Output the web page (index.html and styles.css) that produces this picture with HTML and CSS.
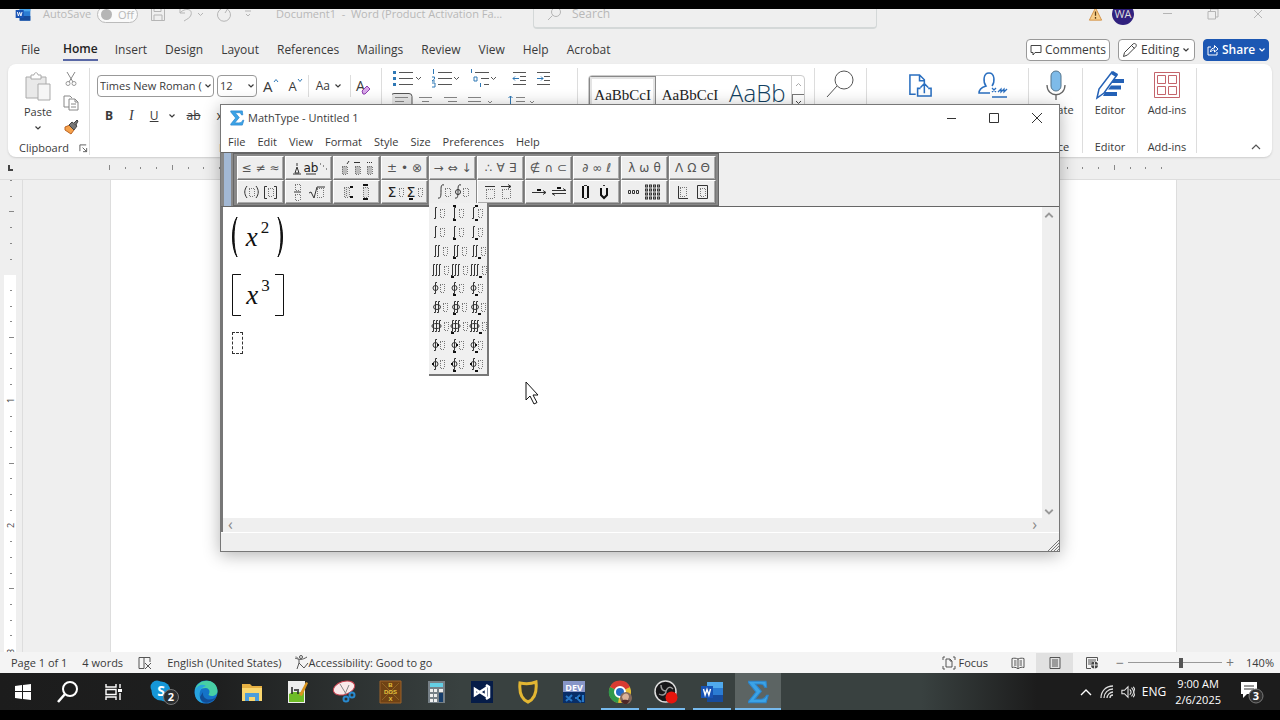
FILE: index.html
```html
<!DOCTYPE html>
<html lang="en">
<head>
<meta charset="utf-8">
<title>Document1 - Word</title>
<link rel="stylesheet" href="styles.css">
</head>
<body>
<svg class="defs" aria-hidden="true">
  <symbol id="chev" viewBox="0 0 8 6"><path d="M1.5 1.5 4 4l2.500-2.500" fill="none" stroke="currentColor" stroke-width="1.200"/></symbol>
  <symbol id="sigma" viewBox="0 0 18 18"><path d="M2 1h13l.5 4.500H14C13.500 3.500 12.500 3 10.500 3H7l4.500 5.500L6.500 14.500H11c2.500 0 3.500-1 4.500-3h1.200L15 17H2v-1.200L7.500 9 2 2.200z" fill="#3ba3e6" stroke="#2b86cf" stroke-width=".8"/></symbol>
  <symbol id="word" viewBox="0 0 24 22"><path d="M7 1h16v20H7z" fill="#2b7cd3"/><path d="M7 1h16v6H7z" fill="#50a9ec"/><path d="M7 14h16v7H7z" fill="#174b9c"/><path d="M1 5h12v12H1z" fill="#1853b4"/><path d="m3.500 8 1.600 6L7 8.500 8.900 14l1.600-6" fill="none" stroke="#fff" stroke-width="1.400"/></symbol>
</svg>
<div class="desktop">
  <div class="band"></div>

  <header class="titlebar">
    <div class="titlerow">
      <div class="quick">
        <svg class="i16" aria-hidden="true"><use href="#word"/></svg>
        <label class="autosave">AutoSave <input type="checkbox" class="toggle"><span class="switch">Off</span></label>
        <svg class="i16" viewBox="0 0 16 16"><path d="M1.500 1.500h11l2 2v11h-13zM4 1.500v4h7v-4M4 14.500V9h8v5.500" class="ln"/></svg>
        <svg class="undo" viewBox="0 0 26 16"><path d="M2 2v5h5M2 7c4-5 13-5 11 2-1 3-4 4-7 6M20 7l2.500 2.500L25 7" class="ln"/></svg>
        <svg class="i16" viewBox="0 0 16 16"><path d="M5 3a6.500 6.500 0 1 0 6 0M7 1l4.500 2L9 7" class="ln"/></svg>
        <svg class="i8" viewBox="0 0 8 8"><path d="M1 1h6M2 4l2 2 2-2" class="ln"/></svg>
        <span class="doc">Document1&nbsp; -&nbsp; Word (Product Activation Fa...</span>
      </div>
      <label class="search"><svg viewBox="0 0 16 16"><circle cx="10" cy="6" r="4.500" class="ln"/><path d="M6.500 9.500 2 14" class="ln"/></svg><input type="text" placeholder="Search" aria-label="Search"></label>
      <div class="wincontrols">
        <svg class="warn" viewBox="0 0 16 16"><path d="M8 1 15 15H1z" fill="#f8cf8c" stroke="#d08a3a"/><path d="M8 5v5M8 11.500v2" stroke="#5a3b12" stroke-width="1.500"/></svg>
        <span class="avatar">WA</span>
        <button aria-label="Minimize"><svg viewBox="0 0 12 12"><path d="M1 5.500h9" class="ln"/></svg></button>
        <button aria-label="Restore"><svg viewBox="0 0 12 12"><path d="M1 3.500h7.500V11H1zM3.500 3V1H11v8H9" class="ln"/></svg></button>
        <button aria-label="Close"><svg viewBox="0 0 12 12"><path d="m2 2 8 8M10 2l-8 8" class="ln"/></svg></button>
      </div>
    </div>
  </header>

  <nav class="tabs">
    <a href="#">File</a><a href="#" class="current">Home</a><a href="#">Insert</a><a href="#">Design</a><a href="#">Layout</a><a href="#">References</a><a href="#">Mailings</a><a href="#">Review</a><a href="#">View</a><a href="#">Help</a><a href="#">Acrobat</a>
    <div class="actions">
      <button class="act comments"><svg viewBox="0 0 12 12"><path d="M1 1.500h10v7H5L3 11V8.500H1z"/></svg>Comments</button>
      <button class="act editing"><svg class="pen" viewBox="0 0 16 16"><path d="m1.500 14.500 1-4L11 2c2-1.500 4 .5 3 2.500L5.500 13zM9.500 3.500l3 3"/></svg>Editing<svg class="c"><use href="#chev"/></svg></button>
      <button class="act share"><svg viewBox="0 0 12 12"><path d="M4 3H1v8h9V8M3.500 8c0-3 2-4 4-4V1.500L11 5 7.500 8V6C6 6 4.500 6.500 3.500 8z"/></svg>Share<svg class="c"><use href="#chev"/></svg></button>
    </div>
  </nav>

  <section class="ribbon">
    <div class="group clip">
      <div class="cliprow">
        <button class="paste"><svg viewBox="0 0 28 30"><path d="M2 5h20v21H2z" fill="#e9e9e9" stroke="#aaa"/><path d="M7 7V3h3c0-3 4-3 4 0h3v4z" fill="#fff" stroke="#aaa"/><path d="M14 12h12v16H14z" fill="#f6f6f6" stroke="#aaa"/></svg>Paste<svg class="c"><use href="#chev"/></svg></button>
        <div class="stack">
          <button aria-label="Cut"><svg viewBox="0 0 16 16"><path d="m4 1 6 10M12 1 6 11" fill="none" stroke="#888"/><circle cx="5" cy="12.500" r="2" fill="none" stroke="#999"/><circle cx="11" cy="12.500" r="2" fill="none" stroke="#999"/></svg></button>
          <button aria-label="Copy"><svg viewBox="0 0 16 16"><path d="M6 12H1V1h6l2 2M6 4h6l3 3v8H6zM12 4v3h3M8 9h5M8 12h5" fill="none" stroke="#888"/></svg></button>
          <button aria-label="Format painter"><svg viewBox="0 0 16 16"><path d="m2 8 5-2 4 5-3 4-6-4z" fill="#f6a14b" stroke="#bb6524"/><path d="m6 6 3-3 5 4-3 4zM11 4l3-3 1 1-2 4" fill="#777" stroke="#444"/></svg></button>
        </div>
      </div>
      <div class="caption">Clipboard<svg viewBox="0 0 10 10"><path d="M1 8V1h7M4 4l4.500 4.500M8.500 4.500v4h-4" fill="none" stroke="#555"/></svg></div>
    </div>
    <div class="group font">
      <div class="row">
        <span class="pick fontname"><select aria-label="Font"><option>Times New Roman (</option></select><svg class="c"><use href="#chev"/></svg></span>
        <span class="pick fontsize"><select aria-label="Font size"><option>12</option></select><svg class="c"><use href="#chev"/></svg></span>
        <button class="grow">A<svg viewBox="0 0 6 5"><path d="m1 4 2-2.500L5 4"/></svg></button><button class="grow small">A<svg viewBox="0 0 6 5"><path d="m1 1 2 2.500L5 1"/></svg></button>
        <button class="case">Aa<svg class="c"><use href="#chev"/></svg></button>
        <button class="clear">A<svg viewBox="0 0 10 10"><path d="m1 6 5-5 3 3-5 5H2z" fill="#d9a8ea" stroke="#8e3fb0"/></svg></button>
      </div>
      <div class="row second">
        <button><b>B</b></button><button><i>I</i></button><button><u>U</u></button><svg class="c"><use href="#chev"/></svg><button><s>ab</s></button><button>x</button>
      </div>
      <div class="caption">Font</div>
    </div>
    <div class="group para">
      <svg viewBox="1 2 170 40" class="paraicons">
        <g stroke="#555" fill="none">
          <path d="M8 6.500h14M8 12.500h14M8 18.500h14M47 6.500h14M47 12.500h14M47 18.500h14M84 6.500h14M90 12.500h8M93 18.500h5M122 6.500h13M129 10.500h6M129 14.500h6M122 18.500h13M146 6.500h13M153 10.500h6M153 14.500h6M146 18.500h13"/>
          <path d="m25 11 2.500 2.500L30 11M63 11l2.500 2.500L68 11M100 11l2.500 2.500 2.500-2.500"/>
          <rect x="0" y="27.500" width="21" height="18" rx="3" fill="#e8e8e8"/>
          <path d="M4 31.500h13M4 35.500h9M28 31.500h13M31 35.500h7M53 31.500h13M57 35.500h9M77 31.500h13M77 35.500h13M125 31.500h9M125 35.500h9M97 35l2 2 2-2M139 35l2 2 2-2" stroke="#888"/>
        </g>
        <path d="M2 5h3v3H2zM2 11h3v3H2zM2 17h3v3H2z" fill="#2f78b5"/>
        <path d="M42.500 3v5M41 11h2.500v2L41 15h3M41 17h3v4h-3M80.500 3v4M83 11h3v4h-3zM89.500 17v4M128 12.500h-6m2-2-2 2 2 2M146 12.500h6m-2-2 2 2-2 2M119.500 38v-8m-2 2 2-2 2 2" fill="none" stroke="#2f78b5"/>
      </svg>
    </div>
    <div class="group styles">
      <div class="gallery"><span class="sample on">AaBbCcI</span><span class="sample">AaBbCcI</span><span class="sample head">AaBb</span><span class="scroller"><svg viewBox="0 0 12 34"><path d="m4 10 2.500-2.500L9 10" fill="none" stroke="#aaa"/><path d="M0 18.500h12.500V34M.5 19v15" fill="none" stroke="#777"/><path d="m4 25 2.500 2.500L9 25" fill="none" stroke="#444"/></svg></span></div>
    </div>
    <div class="group find"><svg viewBox="0 0 30 30"><circle cx="19" cy="11" r="9" fill="none" stroke="#555"/><path d="M12 17 2 28" stroke="#555"/></svg></div>
    <div class="group adobe">
      <svg viewBox="0 0 26 26"><path d="M8 22H2V2h10l5 5v5M12 2v6h5M13 16h-3v8h14v-8h-3M17 21V12m-4 3 4-4 4 4" fill="none" stroke="#2a6fc0" stroke-width="1.600"/></svg>
      <svg viewBox="0 0 32 28"><path d="M13 22H2c0-5 4-6 7-7C6 11 6 2 12 2s6 9 3 13" fill="none" stroke="#2a6fc0" stroke-width="1.500"/><path d="m15 17 4 4m0-4-4 4M21 21l3-3v3l3-3v3l3-3M15 26h15" fill="none" stroke="#2a6fc0" stroke-width="1.300"/></svg>
    </div>
    <div class="group one voice"><svg viewBox="0 0 30 30"><rect x="10" y="1" width="10" height="20" rx="5" fill="#7ebbe9" stroke="#55758c"/><path d="M6 15c0 13 18 13 18 0M15 25v5" fill="none" stroke="#666" stroke-width="1.300"/></svg><span>Dictate</span><span class="caption">Voice</span></div>
    <div class="group one editor-tool"><svg viewBox="0 0 30 30"><path d="M18 9h11v4H16zM16 15.500h10v4H13zM10 22h12v4H8z" fill="#2461b6"/><path d="m2 28 2-9L17 2l5 3L9 23z" fill="#fff" stroke="#2461b6" stroke-width="1.500"/><path d="m16 4 5 3 2-3-5-3z" fill="#2461b6"/></svg><span>Editor</span><span class="caption">Editor</span></div>
    <div class="group one addins"><svg viewBox="0 0 30 30"><path d="M2.500 2.500h25v25h-25zM5.500 5.500h8v8h-8zM16.500 5.500h8v8h-8zM5.500 16.500h8v8h-8zM16.500 16.500h8v8h-8z" fill="none" stroke="#c4646b"/></svg><span>Add-ins</span><span class="caption">Add-ins</span></div>
    <svg class="collapse" viewBox="0 0 10 6"><path d="m1 5 4-4 4 4" fill="none" stroke="#555" stroke-width="1.200"/></svg>
  </section>

  <div class="hruler"><svg id="hticks" width="1280" height="22"><path d="M9 8v5h4" fill="none" stroke="#444" stroke-width="2"/></svg></div>

  <main class="workspace">
    <svg id="vticks" class="vruler" width="23" height="472"><rect x="4" y="95" width="12" height="377" fill="#fff"/></svg>
    <div class="canvas"><div class="page"></div></div>
  </main>

  <footer class="status">
    <span class="pg">Page 1 of 1</span><span class="wc">4 words</span>
    <svg class="proof" viewBox="0 0 14 14"><path d="M6 12.500H1v-11h5zM6 1.500h6V6M7 7l6 6M13 7l-6 6" class="dk"/></svg>
    <span class="lang">English (United States)</span>
    <svg class="i16" viewBox="0 0 16 16"><path d="M2 3c5 2 7 2 12-1M6 4v4l-2 6M6 8l3 3M9 11l2 2 4-5M3 1.500l2 2" class="dk"/><circle cx="8" cy="2" r="1.500" class="dk"/></svg><span>Accessibility: Good to go</span>
    <div class="views">
      <svg class="focusicon" viewBox="0 0 14 14"><path d="M1 4V1h2M11 1h2v3M1 10v3h2M11 13h2v-3M4 3h4l2 2v6H4zM8 3v2h2" class="dk"/></svg><span class="focus">Focus</span>
      <button aria-label="Read mode"><svg viewBox="0 0 14 12"><path d="M7 2v10C5 10 3 10 1 10.500v-9C3 1 5 1 7 2c2-1 4-1 6-.5v9c-2-.5-4-.5-6 1.500M3 4h2.500M3 6h2.500M3 8h2.500M8.500 4H11M8.500 6H11M8.500 8H11" class="dk"/></svg></button>
      <button class="on" aria-label="Print layout"><svg viewBox="0 0 14 12"><path d="M2 .5h10v11H2zM4 3h6M4 5h6M4 7h6M4 9h6" class="dk"/></svg></button>
      <button aria-label="Web layout"><svg viewBox="0 0 14 12"><path d="M6 11.500H1.500V.5h11V4M3 3h8M3 5h5M3 7h3" class="dk"/><circle cx="9.500" cy="8" r="3.500" fill="#444"/><path d="M6 8h7M9.500 5v7" stroke="#ddd"/></svg></button>
      <span class="pm">−</span><input type="range" min="10" max="200" value="118" aria-label="Zoom"><span class="pm">+</span><span class="pct">140%</span>
    </div>
  </footer>

  <div class="taskbar">
    <button aria-label="Start"><svg viewBox="0 0 24 24"><path d="m4 6 7-1v6H4zM12 5l8-1v7h-8zM4 12h7v7l-7-1zM12 12h8v8l-8-1z" fill="#fff"/></svg></button>
    <button aria-label="Search"><svg viewBox="0 0 24 24"><circle cx="14" cy="9" r="7" fill="none" stroke="#fff" stroke-width="2"/><path d="m9 14-7 8" stroke="#fff" stroke-width="2.500"/></svg></button>
    <button aria-label="Task view"><svg viewBox="0 0 24 24"><path d="M4 4v3h10V4M4 20v-3h10v3M4 9.500h10v5H4zM18 4v4M18 13v7" fill="none" stroke="#fff" stroke-width="1.400"/><path d="M16 9h4v3h-4z" fill="#fff"/></svg></button>
    <button aria-label="Skype"><svg class="wide" viewBox="0 0 32 28"><circle cx="9" cy="9" r="6.500" fill="#1697d8"/><circle cx="13" cy="13" r="9.500" fill="#1697d8"/><circle cx="17" cy="17" r="6.500" fill="#1697d8"/><text x="13" y="18" class="tb" font-size="14">S</text><circle cx="23" cy="19" r="7.500" fill="#2b2e30" stroke="#777"/><text x="23" y="23" class="tb" font-size="11">2</text></svg></button>
    <button aria-label="Edge"><svg viewBox="0 0 24 24"><circle cx="12" cy="12" r="11.500" fill="#1473c9"/><path d="M1 10C3-2 23-3 23.500 11c0 5-6 6-9 4 2-3 1-7-3-7-5 0-7 3-10 6z" fill="#47cfa4"/><path d="M1 10C4 4 9 4 12 6c-8 2-8 12-3 17C3 22 0 17 1 10z" fill="#27a4df"/><path d="M9 12c-1 7 7 10 13 5-4 7-15 8-16 0z" fill="#114d96"/></svg></button>
    <button aria-label="File Explorer"><svg viewBox="0 0 24 24"><path d="M2 4h8l2 2h10v14H2z" fill="#e6b043"/><path d="M2 8h20v13H2z" fill="#f9d66f"/><path d="M5 21v-8h14v8h-4v-4H9v4z" fill="#4c9ddb"/></svg></button>
    <button aria-label="Editor"><svg viewBox="0 0 24 24"><path d="M2 1h17v22H2z" fill="#eee"/><path d="M3 14c6-4 9 0 15-3v11H3z" fill="#6ebc27"/><path d="M6 7v7M8 10h3M12 9v5" stroke="#222" stroke-width="1.500"/><path d="m13 15 7-13 2 1-6 13z" fill="#d99520"/></svg></button>
    <button aria-label="Snipping Tool"><svg viewBox="0 0 24 24"><ellipse cx="12" cy="8" rx="11" ry="6.500" fill="#fae9e9" stroke="#c94350" transform="rotate(-18 12 8)"/><path d="m8 4 6 10M17 5l-4 9" stroke="#888"/><circle cx="14" cy="19" r="2.500" fill="none" stroke="#2889ce" stroke-width="2"/><circle cx="20" cy="15" r="2.500" fill="none" stroke="#2889ce" stroke-width="2"/></svg></button>
    <button aria-label="DOSBox"><svg viewBox="0 0 24 24"><path d="M2 1h21v22H2z" fill="#704214" stroke="#9c622b"/><path d="m4 3 17 17M21 3 4 20" stroke="#8f6424"/><text x="12.500" y="7" class="dos">B</text><text x="12.500" y="14" class="dos">DOS</text><text x="12.500" y="21" class="dos">X</text></svg></button>
    <button aria-label="Calculator"><svg viewBox="0 0 24 24"><path d="M4 1h17v22H4z" fill="#768087"/><path d="M6 3h13v4H6z" fill="#64cfe5"/><path d="M6 9h3v3H6zM10 9h3v3h-3zM15 9h4v3h-4zM6 14h3v3H6zM10 14h3v3h-3zM6 19h3v3H6zM10 19h3v3h-3z" fill="#eee"/><path d="M15 13h4v9h-4z" fill="#173e6c"/></svg></button>
    <button aria-label="Visual Studio"><svg viewBox="0 0 24 24"><path d="M1 1h22v22H1z" fill="#061c48"/><path d="m5 9 11 7V8L5 15zM16 5l3 2v10l-3 2" fill="none" stroke="#fff" stroke-width="2.500"/></svg></button>
    <button aria-label="Security"><svg viewBox="0 0 24 24"><path d="M4 3c5 1 11 1 16-1 1 10-1 17-8 20C5 19 3 13 4 3z" fill="#393b31" stroke="#e3b632" stroke-width="3"/></svg></button>
    <button aria-label="Dev"><svg viewBox="0 0 24 24"><path d="M1 1h22v12H1z" fill="#8796c8"/><path d="M1 12h22v11H1z" fill="#082e68"/><text x="12" y="11" class="tb" font-size="9">DEV</text><path d="m4 16 6 5M10 15l-6 6M13 18h3M18 15l-3 3 4 4M21 15v7" stroke="#2878c6" stroke-width="2"/></svg></button>
    <button class="run" aria-label="Chrome"><svg viewBox="0 0 24 24"><circle cx="12" cy="12" r="11" fill="#e7bf34"/><path d="M12 12 2 7a11 11 0 0 1 20 0z" fill="#d93b32"/><path d="M12 12 2 7a11 11 0 0 0 8 16z" fill="#31994a"/><circle cx="12" cy="12" r="5" fill="#246bc5" stroke="#fff" stroke-width="2"/><circle cx="18" cy="18" r="6" fill="#84695d"/><path d="M14 17c2-5 7-4 7 0l-2 5h-3z" fill="#dbb399"/><path d="M13 21c4-3 7 0 9-1l-3 4h-3z" fill="#4d2827"/></svg></button>
    <button class="run" aria-label="OBS"><svg viewBox="0 0 24 24"><circle cx="11.500" cy="11.500" r="10.500" fill="#171719" stroke="#ddd" stroke-width="1.500"/><path d="M7 5c0 5 3 6 5 6 2-5 5-4 7-2M12 11c0 4-4 5-7 3" fill="none" stroke="#999" stroke-width="1.500"/><circle cx="17.500" cy="17.500" r="6" fill="#e8150d"/></svg></button>
    <button class="run" aria-label="Word"><svg><use href="#word"/></svg></button>
    <button class="run active" aria-label="MathType"><svg><use href="#sigma"/></svg></button>
    <div class="tray">
      <svg class="t1" viewBox="0 0 12 8"><path d="m1 7 5-5 5 5" fill="none" stroke="#fff" stroke-width="1.400"/></svg>
      <svg class="t2" viewBox="0 0 14 14"><g fill="none" stroke="#ddd" stroke-width="1.300"><path d="M1 13C1 6 6 1 13 1M4 13c0-5 4-9 9-9M7 13c0-3 3-6 6-6M10 13c0-2 1-3 3-3"/></g></svg>
      <svg class="t2" viewBox="0 0 16 14"><path d="M1 5h3l4-4v12L4 9H1zM10 4c2 2 2 4 0 6M12 2c3 3 3 7 0 10M14 1c3 4 3 8 0 12" fill="none" stroke="#eee" stroke-width="1.200"/></svg>
      <span>ENG</span><span class="clock">9:00 AM<br>2/6/2025</span>
      <svg class="note" viewBox="0 0 26 26"><path d="M2 3h16v12H8l-4 4v-4H2z" fill="#fff"/><path d="M5 7h10M5 10h10" stroke="#333"/><circle cx="17" cy="17" r="7" fill="#303030" stroke="#777"/><text x="17" y="21" class="tb" font-size="11">3</text></svg>
    </div>
  </div>
  <div class="band"></div>

  <section class="mathtype" aria-label="MathType - Untitled 1">
    <div class="mttitle"><svg class="logo"><use href="#sigma"/></svg><span>MathType - Untitled 1</span>
      <div class="mtctl"><button aria-label="Minimize"><svg viewBox="0 0 12 12"><path d="M2 6.500h9"/></svg></button><button aria-label="Maximize"><svg viewBox="0 0 12 12"><path d="M1.500 1.500h9v9h-9z"/></svg></button><button aria-label="Close"><svg viewBox="0 0 12 12"><path d="m1 1 10 10M11 1 1 11"/></svg></button></div>
    </div>
    <nav class="menu"><button>File</button><button>Edit</button><button>View</button><button>Format</button><button>Style</button><button>Size</button><button>Preferences</button><button>Help</button></nav>
    <div class="toolbar">
      <div class="grip"></div>
      <div class="palettes">
        <button><span>≤</span><span>≠</span><span>≈</span></button>
        <button><svg viewBox="0 0 42 20"><path d="M9 5v3M7 15l2-6 2 6zM5 16h8M18 16h10" class="k"/><text x="23" y="14" font-size="12">ab</text><path d="M32 6h1M35 8h1M38 11h1" class="k"/></svg></button>
        <button><svg viewBox="0 0 42 20"><path d="M6 8h5v8H6zM19 8h5v8h-5zM31 8h5v8h-5z" class="dot fill"/><path d="m11 6 2-3M18 4.500h6M31 4.500h1M33 4.500h1M35 4.500h1" class="k"/></svg></button>
        <button><span>±</span><span>•</span><span>⊗</span></button>
        <button><span>→</span><span>⇔</span><span>↓</span></button>
        <button><span>∴</span><span>∀</span><span>∃</span></button>
        <button><span>∉</span><span>∩</span><span>⊂</span></button>
        <button><span>∂</span><span>∞</span><span>ℓ</span></button>
        <button><span>λ</span><span>ω</span><span>θ</span></button>
        <button><span>Λ</span><span>Ω</span><span>Θ</span></button>
        <button><svg viewBox="0 0 42 20"><path d="M7 4c-3 4-3 8 0 12M16 4c3 4 3 8 0 12M27 4.500h-2.500v12H27M34 4.500h2.500v12H34" class="k"/><path d="M9 6h5v8H9zM28 6h5v8h-5z" class="dot"/></svg></button>
        <button><svg viewBox="0 0 42 20"><path d="M7 2h5v6H7zM7 12h5v6H7zM29 6h6v9h-6z" class="dot"/><path d="M6 10h7M21 11l2-1 3 6 3-11h8" class="k"/></svg></button>
        <button><svg viewBox="0 0 42 20"><path d="M8 5h5v10H8zM27 5h5v10h-5z" class="dot fill2"/><path d="M10 5v10" class="dot"/><path d="M14 5h3M14 15h3M27 3h5M27 17h5" class="k b"/></svg></button>
        <button><svg viewBox="0 0 42 20"><text x="8" y="15" font-size="14">Σ</text><text x="27" y="15" font-size="14">Σ</text><path d="M25 17h4" class="k b"/><path d="M15 6h4v8h-4zM34 6h4v8h-4z" class="dot"/></svg></button>
        <button class="open" aria-expanded="true"><svg viewBox="0 0 42 20"><path d="M12 3c-3-1-3 2-3 6s0 8-3 7M29 3c-3-1-3 2-3 6s0 8-3 7" class="k"/><circle cx="26" cy="10" r="2.500" class="k"/><path d="M13 6h5v8h-5zM31 6h5v8h-5z" class="dot"/></svg></button>
        <button><svg viewBox="0 0 42 20"><path d="M6 7h8v9H6zM22 7h8v9h-8z" class="dot"/><path d="M5 4.500h10M21 4.500h10l-3-2m3 2-3 2" class="k"/></svg></button>
        <button><svg viewBox="0 0 42 20"><path d="M4 10.500h14l-3-2m3 2-3 2M24 8.500h14l-3-2M38 11.500H24l3 2" class="k"/><path d="M9 8h4M29 6h4" class="k b"/></svg></button>
        <button><svg viewBox="0 0 42 20"><path d="M7 4v12M12 4v12M25 6v7l3 3 3-3V6" class="k b"/><path d="M8 3.500h3M8 16.500h3M27 3.500h2" class="k"/></svg></button>
        <button><svg viewBox="0 0 42 20"><path d="M4.500 8.500h2v3h-2zM8.500 8.500h2v3h-2zM12.500 8.500h2v3h-2z" class="k"/><path d="M21 4h15M21 8h15M21 12h15M21 16h15" stroke="#333" stroke-width="3" stroke-dasharray="3 1"/><path d="M22 4h14M22 8h14M22 12h14M22 16h14" stroke="#ccc" stroke-dasharray="1 3"/></svg></button>
        <button><svg viewBox="0 0 42 20"><path d="M8 5h6v9H8zM28 6h5v8h-5z" class="dot"/><path d="M6.500 4v12.500H16M25.500 3.500h10v13h-10z" class="k"/></svg></button>
      </div>
    </div>
    <div class="editor">
      <div class="equations">
        <div class="eq"><svg viewBox="0 0 7 42"><path d="M6 1C0 10 0 32 6 41 2 32 2 10 6 1z"/></svg><span>x<sup>2</sup></span><svg viewBox="0 0 7 42"><path d="M1 1c6 9 6 31 0 40C5 32 5 10 1 1z"/></svg></div>
        <div class="eq sq"><svg viewBox="0 0 10 42"><path d="M10 .5H1.500v41H10" fill="none"/></svg><span>x<sup>3</sup></span><svg viewBox="0 0 10 42"><path d="M0 .5h8.500v41H0" fill="none"/></svg></div>
        <div class="slot"></div>
      </div>
      <div class="vscroll"><svg><use href="#chev" transform="rotate(180 6 5)"/></svg><svg><use href="#chev"/></svg></div>
      <div class="hscroll"><span>‹</span><span>›</span></div>
    </div>
    <div class="mtstatus"><svg viewBox="0 0 12 12"><path d="M1 12 12 1M4 12l8-8M7 12l5-5M10 12l2-2" stroke="#777"/></svg></div>
    <div class="dropdown" id="integrals"></div>
  </section>
  <svg class="cursor" viewBox="0 0 14 24"><path d="M1 1v18l4-4 4 8 3-1.500-4-7.500h5z" fill="#fff" stroke="#111"/></svg>
</div>
<script src="script.js"></script>
</body>
</html>
```
FILE: styles.css
```css
* { box-sizing: border-box; }
body { margin: 0; background: #000; font: 12px/16px "Open Sans", "Noto Sans", sans-serif; color: #3a3a3a; }
button, input, select { font: inherit; color: inherit; }
button { padding: 0; border: 0; background: none; }
a { color: inherit; text-decoration: none; }
svg { display: block; flex: none; }
.defs { position: absolute; width: 0; height: 0; }
.desktop { position: relative; height: 100vh; min-height: 720px; display: flex; flex-direction: column; background: #efefef; overflow: hidden; white-space: nowrap; }
.band { flex: 0 0 9px; background: #000; }
.taskbar + .band { flex-basis: 10px; }
.ln { fill: none; stroke: #b5b5b5; }
.dk { fill: none; stroke: #555; }
.c { width: 8px; height: 6px; }

.titlebar { flex: 0 0 28px; overflow: hidden; }
.titlerow { display: flex; height: 26px; margin-top: -8px; align-items: center; color: #b8b8b8; }
.quick { flex: 0 0 533px; display: flex; align-items: center; gap: 12px; padding-left: 15px; font-size: 11px; }
.i16 { width: 16px; height: 16px; }
.i8 { width: 8px; height: 8px; }
.undo { width: 26px; height: 16px; }
.autosave { display: flex; align-items: center; gap: 6px; }
.toggle { position: absolute; opacity: 0; }
.switch { width: 41px; height: 17px; border: 1px solid #bbb; border-radius: 9px; background: #fafafa; padding-left: 20px; line-height: 15px; position: relative; }
.switch::before { content: ""; position: absolute; left: 3px; top: 2px; width: 11px; height: 11px; border-radius: 50%; background: #b5b5b5; }
.doc { margin-left: 12px; }
.search { flex: 0 0 344px; height: 30px; display: flex; align-items: center; gap: 10px; padding-left: 12px; border: 1px solid #d4d8d8; border-bottom-width: 2px; border-radius: 4px; }
.search svg { width: 16px; height: 16px; }
.search input { flex: 1; border: 0; background: none; outline: 0; padding: 0; }
.search input::placeholder { color: #b8b8b8; }
.wincontrols { margin-left: auto; display: flex; align-items: center; padding-right: 16px; }
.warn { width: 15px; height: 14px; }
.avatar { width: 22px; height: 22px; margin: 0 28px 0 9px; border-radius: 50%; background: #30217e; color: #ddd; font-size: 11px; line-height: 22px; text-align: center; }
.wincontrols button { margin-left: 33px; }
.avatar + button { margin-left: 0; }
.wincontrols button svg { width: 12px; height: 12px; }

.tabs { flex: 0 0 27px; display: flex; align-items: center; padding: 0 11px 1px 12px; }
.tabs a { line-height: 22px; margin: 0 9px; }
.tabs a.current { font-weight: 600; border-bottom: 2px solid #5867a5; line-height: 20px; margin-left: 14px; margin-right: 8px; color: #222; }
.actions { margin-left: auto; display: flex; gap: 8px; }
.act { height: 22px; display: flex; align-items: center; gap: 3px; padding: 0 3px; border: 1px solid #999; border-radius: 4px; background: #fff; }
.act svg { width: 12px; height: 12px; fill: none; stroke: #444; }
.act .pen { width: 16px; height: 16px; }
.act .c { width: 8px; height: 6px; }
.comments { width: 84px; }
.editing { width: 77px; }
.share { width: 66px; background: #1c57b3; border-color: #1c57b3; color: #fff; font-weight: 600; }
.share svg { stroke: #fff; }

.ribbon { flex: 0 0 93px; display: flex; margin: 0 8px; background: #fff; border-radius: 8px; box-shadow: 0 1px 2px #ccc; position: relative; font-size: 11px; }
.group { margin: 4px 0; border-right: 1px solid #ddd; flex: none; }
.caption { line-height: 14px; }
.clip { width: 82px; display: flex; flex-direction: column; justify-content: space-between; padding-left: 11px; margin-bottom: 2px; }
.cliprow { display: flex; gap: 6px; }
.paste { display: flex; flex-direction: column; align-items: center; width: 38px; padding-top: 4px; gap: 2px; }
.paste > svg:first-child { width: 28px; height: 30px; }
.paste .c { margin-top: 3px; }
.stack { display: flex; flex-direction: column; gap: 8px; padding-top: 3px; }
.stack svg { width: 16px; height: 16px; }
.clip .caption { display: flex; align-items: center; gap: 10px; }
.clip .caption svg { width: 9px; height: 9px; }
.font { width: 292px; padding: 7px 0 0 7px; display: flex; flex-direction: column; margin-bottom: 2px; }
.font > .caption { margin-top: auto; padding-right: 17px; text-align: center; }
.row { display: flex; align-items: center; height: 22px; }
.pick { position: relative; height: 22px; }
.pick select { appearance: none; width: 100%; height: 22px; border: 1px solid #999; border-radius: 4px; background: #fff; padding: 0 0 0 2px; }
.pick .c { position: absolute; right: 2px; top: 8px; }
.fontname { width: 117px; margin-right: 3px; }
.fontsize { width: 40px; }
.grow { display: flex; font-size: 15px; margin-left: 6px; }
.grow svg { width: 6px; height: 5px; fill: none; stroke: #2f78b5; }
.grow.small { font-size: 13px; margin-left: 10px; }
.case { display: flex; align-items: center; gap: 4px; font-size: 12px; border-left: 1px solid #ddd; border-right: 1px solid #ddd; height: 22px; padding: 0 8px 0 7px; margin-left: 5px; }
.clear { display: flex; align-items: center; font-size: 14px; margin-left: 5px; }
.clear svg { width: 10px; height: 10px; margin: 8px 0 0 -4px; }
.second { font-size: 12px; margin-top: 8px; gap: 16px; padding-left: 8px; }
.second i { font-family: "Liberation Serif", serif; font-size: 14px; }
.second .c { margin: 0 -6px; }
.para { width: 196px; padding-left: 10px; }
.paraicons { width: 170px; height: 40px; }
.styles { width: 237px; padding: 7px 0 0 10px; }
.gallery { display: flex; width: 217px; height: 36px; border: 1px solid #ccc; border-radius: 4px; overflow: hidden; }
.sample { font: 15px/38px "Liberation Serif", serif; color: #222; width: 68px; text-align: center; }
.sample.on { outline: 1px solid #888; outline-offset: -1px; box-shadow: inset 0 0 0 3px #e4e4e4; }
.sample.head { font: 24px/34px "Open Sans", sans-serif; font-weight: 300; color: #123f61; }
.scroller { border-left: 1px solid #ccc; flex: 1; }
.scroller svg { width: 12px; height: 34px; }
.find { width: 52px; padding: 1px 0 0 10px; }
.find svg { width: 30px; height: 30px; }
.adobe { width: 162px; display: flex; align-items: flex-start; gap: 44px; padding: 5px 0 0 41px; }
.adobe svg { width: 25px; height: 25px; }
.adobe svg + svg { width: 32px; height: 28px; margin-top: -2px; }
.one { width: 54px; display: flex; flex-direction: column; align-items: center; padding-top: 2px; }
.one > svg { width: 30px; height: 30px; }
.one > span { line-height: 20px; }
.one > .caption { margin-top: auto; line-height: 12px; }
.editor-tool { width: 55px; }
.addins { width: 59px; }
.collapse { width: 10px; height: 6px; position: absolute; right: 11px; bottom: 7px; }

.hruler { flex: 0 0 23px; border-bottom: 1px solid #ddd; overflow: hidden; }
.workspace { flex: 1; display: flex; overflow: hidden; }
.vruler { border-right: 1px solid #ddd; }
.tick { stroke: #888; }
.num { font-size: 9px; fill: #444; text-anchor: middle; }
.canvas { flex: 1; display: flex; padding: 0 103px 0 87px; }
.page { flex: 1; background: #fff; border: solid #ddd; border-width: 0 1px; }

.status { flex: 0 0 21px; display: flex; align-items: center; background: #f4f4f4; padding: 0 6px 0 11px; font-size: 11px; }
.pg { margin-right: 15px; }
.wc { margin-right: 15px; }
.proof { width: 14px; height: 14px; margin-right: 15px; }
.lang { margin-right: 12px; }
.lang + .i16 { margin-right: -1px; }
.views { margin-left: auto; display: flex; align-items: center; height: 100%; }
.focusicon { width: 14px; height: 14px; margin-right: 2px; }
.focus { margin-right: 11px; }
.views button { width: 37px; height: 20px; display: flex; align-items: center; justify-content: center; }
.views button.on { background: #e1e1e1; }
.views button svg { width: 14px; height: 12px; }
.pm { width: 12px; text-align: center; margin: 0 2px; font-size: 14px; color: #777; }
.views button + .pm { margin-left: 4px; }
.pct { margin-left: 8px; }
.views input { appearance: none; width: 94px; height: 12px; margin: 0; background: linear-gradient(#999, #999) center / 100% 1px no-repeat; }
.views input::-webkit-slider-thumb { appearance: none; width: 4px; height: 10px; background: #555; }

.taskbar { flex: 0 0 37px; display: flex; background: linear-gradient(90deg, #1c1c1c 0, #1e1f1f 17%, #394140 36%, #394140 72%, #1c1c1c 81%); color: #fff; }
.taskbar button { width: 46px; display: flex; align-items: center; justify-content: center; }
.taskbar button:first-child { width: 45px; }
.taskbar svg { width: 24px; height: 24px; }
.taskbar .wide { width: 32px; height: 28px; margin-left: 7px; }
.taskbar .run { background: linear-gradient(#76b9ed, #76b9ed) bottom / 38px 2px no-repeat; }
.taskbar .active { background: linear-gradient(#76b9ed, #76b9ed) bottom / 100% 2px no-repeat #5c6463; }
.tb { fill: #fff; font-weight: 700; text-anchor: middle; }
.dos { fill: #e5c23e; font: 700 6px "Liberation Sans", sans-serif; text-anchor: middle; }
.tray { margin-left: auto; display: flex; align-items: center; gap: 7px; padding-right: 15px; }
.tray .t1 { width: 12px; height: 8px; margin-right: 1px; }
.tray .t2 { width: 14px; height: 14px; }
.clock { text-align: center; line-height: 16px; font-size: 11px; margin: 0 11px 0 2px; }
.tray .note { width: 26px; height: 26px; }

.mathtype { position: absolute; left: 220px; top: 104px; width: 840px; height: 448px; display: flex; flex-direction: column; background: #efefef; border: 1px solid #777; box-shadow: 0 3px 16px rgba(0,0,0,.3); font-size: 11px; }
.mttitle { flex: 0 0 26px; display: flex; align-items: center; background: #fff; padding: 0 16px 0 8px; }
.logo { width: 16px; height: 16px; margin-right: 3px; }
.mtctl { margin-left: auto; display: flex; gap: 31px; }
.mtctl svg { width: 12px; height: 12px; fill: none; stroke: #333; }
.menu { flex: 0 0 21px; display: flex; gap: 12px; background: #fff; padding-left: 7px; }
.toolbar { flex: 0 0 55px; display: flex; border: solid #666; border-width: 1px 0; }
.grip { width: 12px; border: solid #888; border-width: 0 2px 0 3px; background: #a2b8d4; }
.palettes { display: grid; grid-template-columns: repeat(10, 47px); grid-template-rows: 24px 24px; gap: 0 1px; padding: 2px 2px 1px 3px; background: #888; border: 1px solid #666; }
.palettes button { display: flex; align-items: center; justify-content: center; gap: 4px; background: #eee; border: 1px solid; border-color: #fff #777 #777 #fff; box-shadow: inset -1px -1px #aaa; font: 12px/20px "DejaVu Sans", sans-serif; color: #555; }
.palettes svg { width: 42px; height: 20px; }
.palettes text { text-anchor: middle; fill: #222; }
.palettes .open { box-shadow: none; border-color: #eee; }
.k { fill: none; stroke: #333; }
.k.b { stroke: #111; stroke-width: 2; }
.dot { fill: none; stroke: #777; stroke-dasharray: 1 1; shape-rendering: crispEdges; }
.dot.fill { fill: #bbb; }
.dot.fill2 { fill: #e0e0e0; }
.editor { flex: 1; display: grid; grid-template-columns: 1fr 17px; grid-template-rows: 1fr 14px; border-left: 2px solid #777; }
.equations { background: #fff; padding: 9px 8px; display: flex; flex-direction: column; align-items: flex-start; gap: 16px; }
.eq { display: flex; align-items: center; color: #111; }
.eq svg { width: 7px; height: 42px; fill: #111; stroke: #111; stroke-width: 1; }
.eq.sq svg { width: 10px; }
.eq span { font: italic 27px/42px "Liberation Serif", serif; height: 42px; width: 39px; text-align: center; }
.eq.sq span { width: 34px; }
.eq sup { font: normal 17px/17px "Liberation Serif", serif; vertical-align: 13px; margin-left: 3px; }
.slot { width: 11px; height: 22px; border: 1px dashed #333; margin-left: 1px; }
.vscroll { display: flex; flex-direction: column; justify-content: space-between; padding: 3px 1px 1px; color: #999; }
.vscroll svg { width: 12px; height: 10px; }
.hscroll { display: flex; justify-content: space-between; padding: 0 5px; color: #888; font-size: 16px; line-height: 12px; }
.mtstatus { flex: 0 0 19px; border-top: 1px solid #fff; display: flex; justify-content: flex-end; align-items: flex-end; }
.mtstatus svg { width: 12px; height: 12px; }
.dropdown { position: absolute; left: 208px; top: 98px; width: 60px; height: 173px; display: grid; grid-template-columns: repeat(3, 19px); grid-template-rows: repeat(9, 1fr); background: #f0f0f0; padding: 1px; border: solid #777; border-width: 0 2px 2px 0; }
.dropdown button { display: flex; align-items: center; justify-content: center; }
.dropdown svg { width: 19px; height: 18px; }
.cursor { position: absolute; left: 525px; top: 381px; width: 14px; height: 24px; }
```
FILE: script.js
```js
const NS = "http://www.w3.org/2000/svg";

function add(parent, tag, attrs, text) {
  const el = document.createElementNS(NS, tag);
  for (const key in attrs) el.setAttribute(key, attrs[key]);
  if (text) el.textContent = text;
  parent.appendChild(el);
  return el;
}

// Horizontal ruler: eighth-inch dots with a longer mark on each half inch.
const h = document.getElementById("hticks");
for (let i = 0; i < 68; i++) {
  const x = Math.round(109 + i * 15.7) + 0.5;
  const d = i % 4 === 0 ? "M" + x + " 8v5" : "M" + x + " 10v2";
  add(h, "path", { d: d, class: "tick" });
}

// Vertical ruler: numbers on whole inches below the top margin.
const v = document.getElementById("vticks");
for (let i = 0; i < 31; i++) {
  const y = Math.round(i * 15.7) + 0.5;
  const n = i - 6;
  if (n === 0) continue;
  if (n > 0 && n % 8 === 0) {
    add(v, "text", { x: 0, y: 0, class: "num", transform: "translate(14 " + y + ") rotate(-90)" }, String(n / 8));
  } else {
    add(v, "path", { d: n % 4 === 0 ? "M9 " + y + "h5" : "M10 " + y + "h2", class: "tick" });
  }
}

// Integral templates: strokes per sign, loop type, and limit placement by column.
const rows = [[1], [1], [2], [3], [1, "o"], [2, "o"], [3, "o"], [1, "arrow"], [1, "arrow"]];
const menu = document.getElementById("integrals");
rows.forEach(function (row, r) {
  for (let col = 0; col < 3; col++) {
    const button = document.createElement("button");
    button.setAttribute("aria-label", "Integral template " + (r * 3 + col + 1));
    const svg = add(button, "svg", { viewBox: "0 0 19 18" });
    const count = row[0];
    const start = count === 3 ? 3 : 5;
    for (let i = 0; i < count; i++) {
      add(svg, "path", { class: "k", d: "M" + (start + i * 3 + 2) + " 3.5h-1.5v11h-1.5" });
    }
    if (row[1]) {
      const cx = start + (count - 1) * 1.5 + 0.5;
      add(svg, "ellipse", { class: "k", cx: cx, cy: 9, rx: count + 1.5, ry: 2.5 });
      if (row[1] === "arrow") add(svg, "path", { class: "k b", d: "M" + (r === 7 ? 7 : 2) + " 9h2" });
    }
    const bx = start + count * 3 + 2;
    add(svg, "rect", { class: "dot", x: bx, y: 5, width: 4, height: 8 });
    const low = col === 1 ? start - 1 : start + count * 3 - 1;
    if (col) add(svg, "path", { class: "k b", d: "M" + low + " 16h3" });
    if (col && r === 0) add(svg, "path", { class: "k b", d: "M" + low + " 2h3" });
    menu.appendChild(button);
  }
});
```
